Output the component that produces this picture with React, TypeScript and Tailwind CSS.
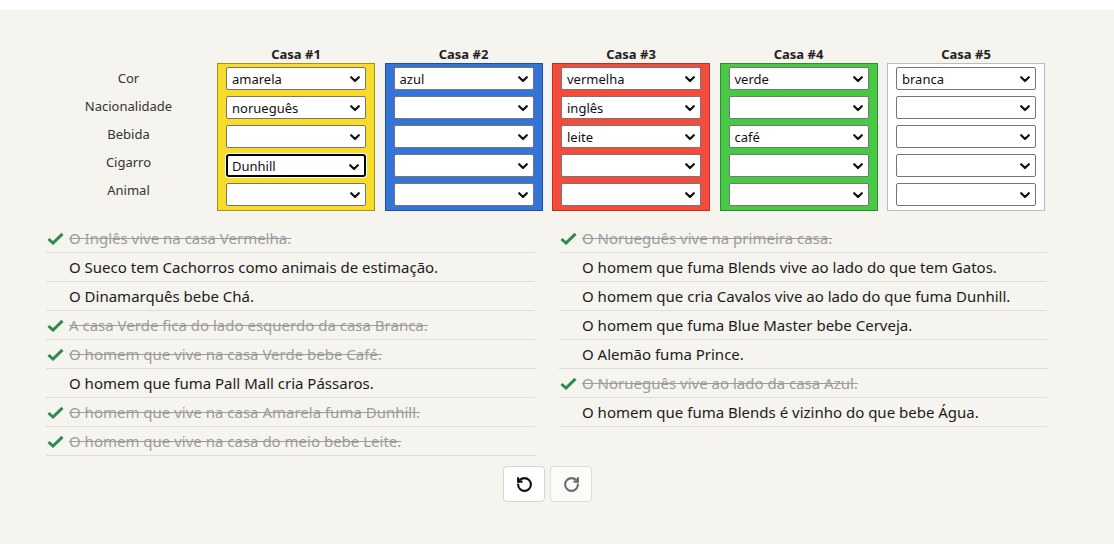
import React from "react";
import { RotateCcw, RotateCw } from "lucide-react";

const houses = [
  { name: "Casa #1", box: "bg-[#f9dc29] border-[#a39323]", values: ["amarela", "norueguês", "", "Dunhill", ""], focus: 3 },
  { name: "Casa #2", box: "bg-[#3474d6] border-[#1f4f9c]", values: ["azul", "", "", "", ""], focus: -1 },
  { name: "Casa #3", box: "bg-[#f44b3b] border-[#b8352a]", values: ["vermelha", "inglês", "leite", "", ""], focus: -1 },
  { name: "Casa #4", box: "bg-[#47c946] border-[#2e8d2e]", values: ["verde", "", "café", "", ""], focus: -1 },
  { name: "Casa #5", box: "bg-white border-[#b9bcc2]", values: ["branca", "", "", "", ""], focus: -1 },
];

const labels = ["Cor", "Nacionalidade", "Bebida", "Cigarro", "Animal"];

const leftClues: [string, boolean][] = [
  ["O Inglês vive na casa Vermelha.", true],
  ["O Sueco tem Cachorros como animais de estimação.", false],
  ["O Dinamarquês bebe Chá.", false],
  ["A casa Verde fica do lado esquerdo da casa Branca.", true],
  ["O homem que vive na casa Verde bebe Café.", true],
  ["O homem que fuma Pall Mall cria Pássaros.", false],
  ["O homem que vive na casa Amarela fuma Dunhill.", true],
  ["O homem que vive na casa do meio bebe Leite.", true],
];

const rightClues: [string, boolean][] = [
  ["O Norueguês vive na primeira casa.", true],
  ["O homem que fuma Blends vive ao lado do que tem Gatos.", false],
  ["O homem que cria Cavalos vive ao lado do que fuma Dunhill.", false],
  ["O homem que fuma Blue Master bebe Cerveja.", false],
  ["O Alemão fuma Prince.", false],
  ["O Norueguês vive ao lado da casa Azul.", true],
  ["O homem que fuma Blends é vizinho do que bebe Água.", false],
];

function Chevron() {
  return (
    <svg width="10" height="7" viewBox="0 0 10 7" className="absolute right-[5px] top-[8px]">
      <path d="M1.2 1.2 L5 5 L8.8 1.2" fill="none" stroke="#111" strokeWidth="2.2" strokeLinecap="round" strokeLinejoin="round" />
    </svg>
  );
}

function FakeSelect({ value, focus }: { value: string; focus: boolean }) {
  return (
    <div
      className={
        "relative h-[23px] w-[140px] bg-white text-[13px] text-[#111] " +
        (focus
          ? "rounded-[3px] border-2 border-black pl-[4px] pt-[1px] leading-[19px] shadow-[0_0_0_1px_#ffffff]"
          : "rounded-[2px] border border-[#767676] pl-[5px] pt-[1px] leading-[21px]")
      }
    >
      {value}
      <Chevron />
    </div>
  );
}

function Check() {
  return (
    <svg width="17" height="13" viewBox="0 0 17 13">
      <path d="M1.5 7 L6 11 L15.5 1.8" fill="none" stroke="#2f8a4f" strokeWidth="3" strokeLinejoin="miter" />
    </svg>
  );
}

function ClueList({ items, width }: { items: [string, boolean][]; width: string }) {
  return (
    <div className={width}>
      {items.map(([t, done], i) => (
        <div key={i} className="flex h-[29px] items-center border-b border-[#dcdcd8]">
          <div className="flex w-[23px] shrink-0 items-center pl-[1px]">{done ? <Check /> : null}</div>
          <span className={done ? "text-[#9c9c9c] line-through" : "text-[#1b1b1b]"}>{t}</span>
        </div>
      ))}
    </div>
  );
}

export default function App() {
  return (
    <div className="min-h-[544px] bg-white pt-[10px]" style={{ fontFamily: '"Noto Sans", "Open Sans", sans-serif' }}>
      <div className="min-h-[534px] bg-[#f5f4ee] pl-[40px] pt-[34px]">
        {/* board */}
        <div className="flex">
          <div className="w-[177px] pt-[21px]">
            {labels.map((l) => (
              <div key={l} className="flex h-[28px] items-center justify-center text-[13px] text-[#333]">
                {l}
              </div>
            ))}
          </div>
          <div className="flex gap-x-[9.5px]">
            {houses.map((h) => (
              <div key={h.name} className="flex w-[158px] flex-col">
                <div className="flex h-[19px] items-center justify-center pt-[2px] text-[13px] font-bold text-[#222]">{h.name}</div>
                <div className={"flex h-[148px] flex-col gap-[6px] border pl-[8px] pt-[3px] " + h.box}>
                  {h.values.map((v, i) => (
                    <FakeSelect key={i} value={v} focus={i === h.focus} />
                  ))}
                </div>
              </div>
            ))}
          </div>
        </div>

        {/* clues */}
        <div className="mt-[13px] flex gap-[24px] pl-[6px] text-[15px]">
          <ClueList items={leftClues} width="w-[489px]" />
          <ClueList items={rightClues} width="w-[488px]" />
        </div>

        {/* buttons */}
        <div className="mt-[10px] flex gap-[5px] pl-[463px]">
          <button className="flex h-[36px] w-[42px] items-center justify-center rounded-[4px] border border-[#d4d4d0] bg-white">
            <RotateCcw size={17} strokeWidth={3} color="#111" />
          </button>
          <button className="flex h-[36px] w-[42px] items-center justify-center rounded-[4px] border border-[#dcdcd8] bg-[#fbfbf7]">
            <RotateCw size={17} strokeWidth={3} color="#6b6b6b" />
          </button>
        </div>
      </div>
    </div>
  );
}
